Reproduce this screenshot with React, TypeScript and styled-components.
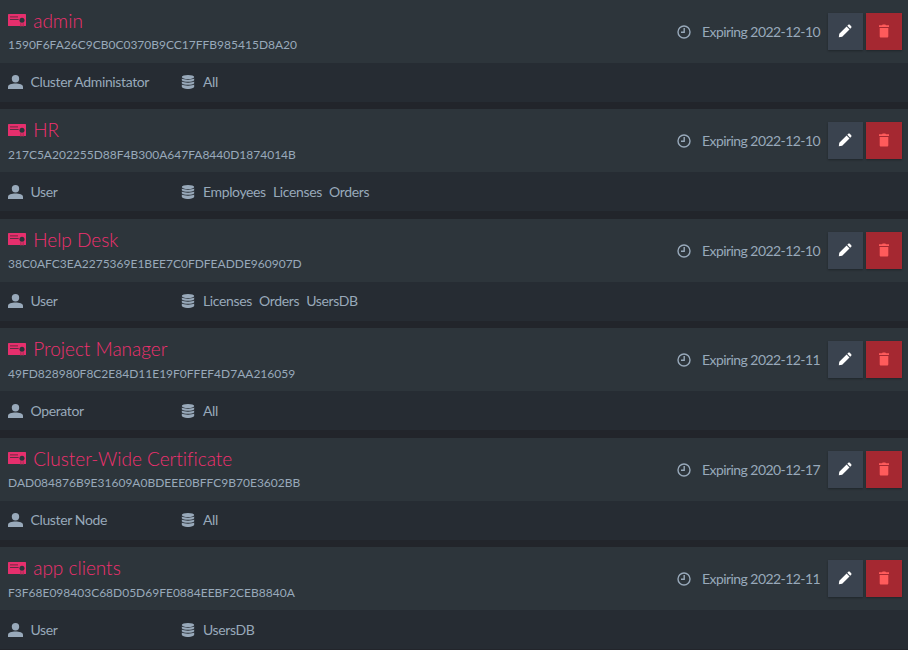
import React from 'react';
import styled, { createGlobalStyle } from 'styled-components';

const GlobalStyle = createGlobalStyle`
  * { box-sizing: border-box; }
  body {
    margin: 0;
    background: #22252b;
    color: #98a9ba;
    font-family: Lato, 'Liberation Sans', sans-serif;
    font-size: 14px;
    line-height: 20px;
    overflow: hidden;
  }
`;

const List = styled.main`
  display: flex;
  flex-direction: column;
  gap: 7.5px;
  height: 650.2px;
  margin-top: -0.2px;
  overflow: hidden;
`;

const Card = styled.article`
  flex: none;
  height: 102px;
  background: #262c33;
`;

const Header = styled.header`
  display: flex;
  justify-content: space-between;
  height: 63px;
  padding: 0 6px 0 8px;
  background: #2d353b;
`;

const Identity = styled.div`
  padding-top: 8px;
`;

const Title = styled.h2`
  display: flex;
  align-items: center;
  gap: 7.2px;
  margin: 0;
  height: 25px;
  color: #f0306f;
  font-size: 19px;
  font-weight: 300;
  font-variant-ligatures: none;
  line-height: 25px;

  svg { margin-top: 1px; }
`;

const Thumbprint = styled.div`
  height: 20px;
  margin-top: 1.5px;
  font-size: 12px;
  line-height: 22px;
`;

const Actions = styled.div`
  display: flex;
  align-items: center;
`;

const Expiry = styled.div`
  display: flex;
  align-items: center;
  gap: 11px;
  margin: 1px 8px 0 0;
  letter-spacing: -0.57px;
`;

const ActionButton = styled.button<{ $danger?: boolean }>`
  display: flex;
  align-items: center;
  justify-content: center;
  width: ${({ $danger }) => ($danger ? 36 : 35)}px;
  height: 37px;
  margin-left: ${({ $danger }) => ($danger ? 3 : 0)}px;
  padding: 0 ${({ $danger }) => ($danger ? 0 : 1)}px 1px 0;
  border: 0;
  background: ${({ $danger }) => ($danger ? '#a52831' : '#3a434f')};
  color: ${({ $danger }) => ($danger ? '#ff5b5b' : '#ffffff')};
  box-shadow: 0 1px 2px rgba(0, 0, 0, 0.3);
`;

const Details = styled.div`
  display: grid;
  grid-template-columns: 173px 1fr;
  align-items: center;
  height: 39px;
  padding-left: 8px;
  letter-spacing: -0.37px;
`;

const Detail = styled.div`
  display: flex;
  align-items: center;
  gap: 7.5px;
`;

const CertificateIcon = () => (
  <svg width="18" height="13" viewBox="0 0 18 13">
    <rect width="18" height="12" rx=".6" fill="#e62f6d" />
    <path fill="#9d2b50" d="M2 2h8v1.6H2z" />
    <path fill="#5d2f43" d="M2 5h8.6v1H2z" />
    <circle cx="14" cy="6.3" r="2.5" fill="#2d353b" />
    <path fill="#9d2b50" d="M12 9.2h.7V12H12zm3.3 0h.7V12h-.7z" />
    <path fill="#c92f61" d="M12.6 9.3h2.8V13L14 11.8 12.6 13z" />
  </svg>
);

const PersonIcon = () => (
  <svg width="15" height="14" viewBox="0 0 15 14" fill="currentColor">
    <circle cx="7.5" cy="3.7" r="3.7" />
    <path d="M0 14v-2.2C0 9.5 3.7 8.5 7.5 8.5S15 9.5 15 11.8V14z" />
  </svg>
);

const DatabaseIcon = () => (
  <svg width="14" height="14" viewBox="0 0 14 14" fill="currentColor">
    <ellipse cx="7" cy="2" rx="6.2" ry="2" />
    <path d="M.8 3.5C3 5 11 5 13.2 3.5v1.7C12 7.3 2 7.3.8 5.2zM.8 6.5C3 8 11 8 13.2 6.5v1.7c-1.2 2.1-11.2 2.1-12.4 0zM.8 9.5C3 11 11 11 13.2 9.5v2.2C12 14.8 2 14.8.8 11.7z" />
  </svg>
);

const ClockIcon = () => (
  <svg width="14" height="14" viewBox="0 0 14 14" fill="none" stroke="currentColor" strokeWidth="1.4">
    <circle cx="7" cy="7" r="6" />
    <path d="M7.2 3v4.2H4" />
  </svg>
);

const PencilIcon = () => (
  <svg width="14" height="14" viewBox="0 0 14 14" fill="currentColor">
    <path d="M.8 13.2l.5-3.4L8.6 2.5l2.9 2.9-7.3 7.3zM9.3 1.8l1-1c.5-.5 1-.5 1.5 0l1.4 1.4c.5.5.5 1 0 1.5l-1 1z" />
  </svg>
);

const TrashIcon = () => (
  <svg width="12" height="14" viewBox="0 0 12 14" fill="currentColor">
    <path d="M1 1.2h3L4.7.5h2.6l.7.7h3v1.9H1zM1.7 4h8.6v8.2c0 .8-.5 1.3-1.3 1.3H3c-.8 0-1.3-.5-1.3-1.3z" />
  </svg>
);

const DatabaseNames = styled.div`
  display: flex;
  gap: 7.2px;
  margin-left: 0.5px;
`;

const certificates = [
  { name: 'admin', thumbprint: '1590F6FA26C9CB0C0370B9CC17FFB985415D8A20', role: 'Cluster Administator', databases: ['All'], expires: '2022-12-10' },
  { name: 'HR', thumbprint: '217C5A202255D88F4B300A647FA8440D1874014B', role: 'User', databases: ['Employees', 'Licenses', 'Orders'], expires: '2022-12-10' },
  { name: 'Help Desk', thumbprint: '38C0AFC3EA2275369E1BEE7C0FDFEADDE960907D', role: 'User', databases: ['Licenses', 'Orders', 'UsersDB'], expires: '2022-12-10' },
  { name: 'Project Manager', thumbprint: '49FD828980F8C2E84D11E19F0FFEF4D7AA216059', role: 'Operator', databases: ['All'], expires: '2022-12-11' },
  { name: 'Cluster-Wide Certificate', thumbprint: 'DAD084876B9E31609A0BDEEE0BFFC9B70E3602BB', role: 'Cluster Node', databases: ['All'], expires: '2020-12-17' },
  { name: 'app clients', thumbprint: 'F3F68E098403C68D05D69FE0884EEBF2CEB8840A', role: 'User', databases: ['UsersDB'], expires: '2022-12-11' },
];

export default function App() {
  return (
    <>
      <GlobalStyle />
      <List>
        {certificates.map((cert) => (
          <Card key={cert.name}>
            <Header>
              <Identity>
                <Title><CertificateIcon />{cert.name}</Title>
                <Thumbprint>{cert.thumbprint}</Thumbprint>
              </Identity>
              <Actions>
                <Expiry><ClockIcon /><span>Expiring {cert.expires}</span></Expiry>
                <ActionButton aria-label="Edit"><PencilIcon /></ActionButton>
                <ActionButton aria-label="Delete" $danger><TrashIcon /></ActionButton>
              </Actions>
            </Header>
            <Details>
              <Detail><PersonIcon />{cert.role}</Detail>
              <Detail>
                <DatabaseIcon />
                <DatabaseNames>{cert.databases.map((db) => <span key={db}>{db}</span>)}</DatabaseNames>
              </Detail>
            </Details>
          </Card>
        ))}
      </List>
    </>
  );
}
